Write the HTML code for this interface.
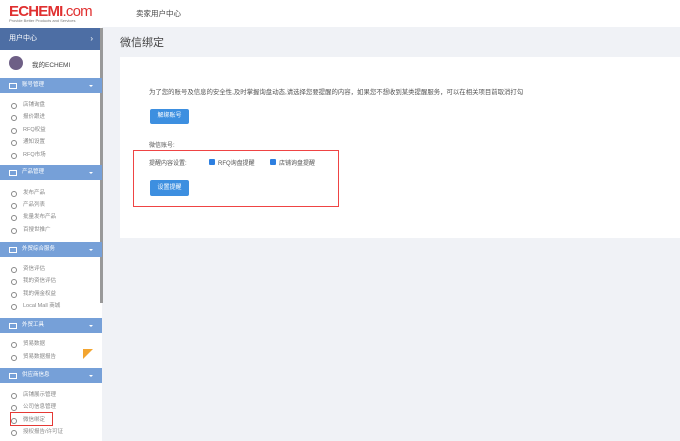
<!DOCTYPE html><html><head><meta charset="utf-8"><style>
*{margin:0;padding:0;box-sizing:border-box}
body{width:680px;height:441px;overflow:hidden;background:#f0f2f6;font-family:"Liberation Sans","Noto Sans CJK SC",sans-serif;position:relative;color:#555}
.a{position:absolute}
.top{left:0;top:0;width:680px;height:27px;background:#fff}
.side{left:0;top:27px;width:102px;height:414px;background:#fff}
.sh{left:0;width:102px;height:15px;background:#76a0d8;color:#fff;font-size:5.5px;line-height:15px;padding-left:22px}
.sh:before{content:"";position:absolute;left:9px;top:5px;width:6px;height:4px;border:1px solid #fff}
.sh:after{content:"";position:absolute;right:9px;top:7px;border:2px solid transparent;border-top-color:#fff}
.it{left:10px;font-size:5.5px;color:#888;line-height:8px;padding-left:13px}
.it:before{content:"";position:absolute;left:1px;top:2px;width:4px;height:4px;border:1px solid #888;border-radius:50%}
.btn{background:#3d8fe0;color:#fff;font-size:6px;text-align:center;border-radius:2px}
.cb{width:6px;height:6px;background:#2d7fe0;border-radius:1px}
</style></head><body>
<div class="a top"></div>
<div class="a" style="left:9px;top:3px;font-size:15px;font-weight:bold;color:#e03030;letter-spacing:-0.8px">ECHEMI<span style="font-weight:normal">.com</span></div>
<div class="a" style="left:9px;top:18px;font-size:4px;color:#777">Provide Better Products and Services</div>
<div class="a" style="left:136px;top:8px;font-size:7.5px;color:#444">卖家用户中心</div>
<div class="a side"></div>
<div class="a" style="left:0;top:28px;width:102px;height:22px;background:#4d6ea4;color:#fff;font-size:7px;line-height:22px;padding-left:9px">用户中心<span style="position:absolute;right:9px;font-size:8px">›</span></div>
<div class="a" style="left:9px;top:56px;width:14px;height:14px;border-radius:50%;background:#6e5f86"></div>
<div class="a" style="left:32px;top:59px;font-size:6.5px;color:#444">我的ECHEMI</div>
<div class="a" style="left:100px;top:28px;width:3px;height:275px;background:#999"></div>
<div class="a sh" style="top:78px">账号管理</div>
<div class="a it" style="top:101px">店铺询盘</div><div class="a it" style="top:113px">报价跟进</div><div class="a it" style="top:126px">RFQ权益</div><div class="a it" style="top:138px">通知设置</div><div class="a it" style="top:151px">RFQ市场</div>
<div class="a sh" style="top:165px">产品管理</div>
<div class="a it" style="top:189px">发布产品</div><div class="a it" style="top:201px">产品列表</div><div class="a it" style="top:213px">批量发布产品</div><div class="a it" style="top:226px">百搜世推广</div>
<div class="a sh" style="top:242px">外贸综合服务</div>
<div class="a it" style="top:265px">资信评估</div><div class="a it" style="top:277px">我的资信评估</div><div class="a it" style="top:290px">我的佣金权益</div><div class="a it" style="top:302px">Local Mall 商城</div>
<div class="a sh" style="top:318px">外贸工具</div>
<div class="a it" style="top:340px">贸易数据</div><div class="a it" style="top:353px">贸易数据报告</div>
<div class="a" style="left:83px;top:349px;width:0;height:0;border-left:10px solid #f3a530;border-bottom:10px solid transparent"></div>
<div class="a sh" style="top:368px">供应商信息</div>
<div class="a it" style="top:391px">店铺展示管理</div><div class="a it" style="top:403px">公司信息管理</div><div class="a it" style="top:416px">微信绑定</div><div class="a it" style="top:428px">授权报告/许可证</div>
<div class="a" style="left:10px;top:412px;width:43px;height:14px;border:1.5px solid #e53935"></div>
<div class="a" style="left:120px;top:34px;font-size:11px;color:#444">微信绑定</div>
<div class="a" style="left:120px;top:57px;width:560px;height:181px;background:#fff"></div>
<div class="a" style="left:149px;top:87px;font-size:6.4px;color:#555;white-space:nowrap">为了您的账号及信息的安全性,及时掌握询盘动态,请选择您要提醒的内容，如果您不想收到某类提醒服务，可以在相关项目前取消打勾</div>
<div class="a btn" style="left:150px;top:109px;width:39px;height:15px;line-height:15px">解绑账号</div>
<div class="a" style="left:149px;top:140px;font-size:6px">微信账号:</div>
<div class="a" style="left:133px;top:150px;width:206px;height:57px;border:1.5px solid #ef4444"></div>
<div class="a" style="left:149px;top:158px;font-size:6px">提醒内容设置:</div>
<div class="a cb" style="left:209px;top:159px"></div><div class="a" style="left:218px;top:158px;font-size:6px">RFQ询盘提醒</div>
<div class="a cb" style="left:270px;top:159px"></div><div class="a" style="left:279px;top:158px;font-size:6px">店铺询盘提醒</div>
<div class="a btn" style="left:150px;top:180px;width:39px;height:16px;line-height:16px">设置提醒</div>
</body></html>
